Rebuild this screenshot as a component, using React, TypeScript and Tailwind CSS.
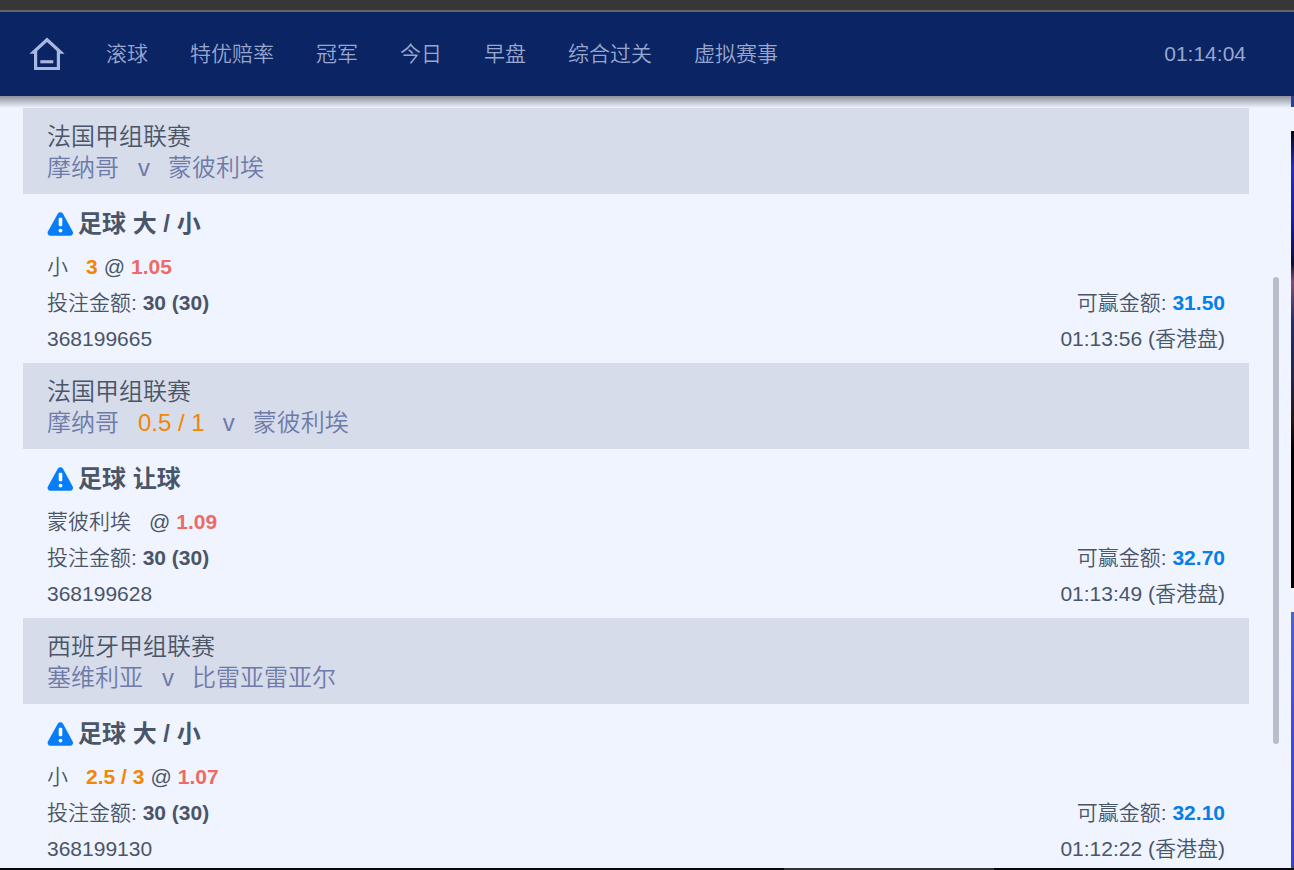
import React from "react";

type Bet = {
  id: string;
  league: string;
  home: string;
  handicap?: string;
  away: string;
  market: string;
  pick: string;
  line?: string;
  odds: string;
  stake: string;
  payout: string;
  time: string;
};

const navItems = ["滚球", "特优赔率", "冠军", "今日", "早盘", "综合过关", "虚拟赛事"];

const bets: Bet[] = [
  {
    id: "368199665",
    league: "法国甲组联赛",
    home: "摩纳哥",
    away: "蒙彼利埃",
    market: "足球 大 / 小",
    pick: "小",
    line: "3",
    odds: "1.05",
    stake: "30 (30)",
    payout: "31.50",
    time: "01:13:56",
  },
  {
    id: "368199628",
    league: "法国甲组联赛",
    home: "摩纳哥",
    handicap: "0.5 / 1",
    away: "蒙彼利埃",
    market: "足球 让球",
    pick: "蒙彼利埃",
    odds: "1.09",
    stake: "30 (30)",
    payout: "32.70",
    time: "01:13:49",
  },
  {
    id: "368199130",
    league: "西班牙甲组联赛",
    home: "塞维利亚",
    away: "比雷亚雷亚尔",
    market: "足球 大 / 小",
    pick: "小",
    line: "2.5 / 3",
    odds: "1.07",
    stake: "30 (30)",
    payout: "32.10",
    time: "01:12:22",
  },
];

const HomeIcon = () => (
  <svg width="36" height="36" viewBox="0 0 36 36" fill="#a9b8e0" aria-hidden="true">
    <path
      fillRule="evenodd"
      d="M18 1.4 35.6 17.8H31V34H5V17.8H.4zM18 6 8.2 15.1V30.9h19.6V15.1z"
    />
    <path d="M11.3 24.2h13v3.1h-13z" />
  </svg>
);

const WarningIcon = () => (
  <svg width="26" height="25" viewBox="0 0 26 25" aria-hidden="true">
    <path
      d="M10.9 1.6a3.1 3.1 0 0 1 5 0l9.5 17.4a3 3 0 0 1-2.5 4.8H3.7a3 3 0 0 1-2.5-4.8z"
      fill="#077df7"
    />
    <rect x="11.7" y="5.8" width="3.6" height="8.5" rx="1.2" fill="#fff" />
    <circle cx="13.5" cy="18.6" r="1.9" fill="#fff" />
  </svg>
);

const Header = () => (
  <header className="flex h-[84px] shrink-0 items-center bg-[#0b2463] pr-12 pl-[29px] text-[#98a7cf]">
    <a href="#" aria-label="首页">
      <HomeIcon />
    </a>
    <nav className="ml-[41px] flex gap-[42px]">
      {navItems.map((item) => (
        <a href="#" key={item} className="whitespace-nowrap">
          {item}
        </a>
      ))}
    </nav>
    <time className="ml-auto">01:14:04</time>
  </header>
);

const BetCard = ({ bet }: { bet: Bet }) => (
  <article>
    <div className="bg-[#d6dcea] px-6 pt-[13px] pb-[11px] text-2xl leading-[31px]">
      <h2>{bet.league}</h2>
      <div className="flex text-[#6e7ba8]">
        <span className="mr-[19px]">{bet.home}</span>
        {bet.handicap && (
          <span className="mr-[18px] text-[#f08705]">{bet.handicap}</span>
        )}
        <span className="mr-[18px]">v</span>
        <span>{bet.away}</span>
      </div>
    </div>
    <div className="px-6 pt-3 pb-[6px] leading-9">
      <h3 className="mb-[7px] flex items-center gap-[5px] text-2xl leading-9 font-bold">
        <WarningIcon />
        {bet.market}
      </h3>
      <div className="flex">
        <span className="mr-[18px]">{bet.pick}</span>
        {bet.line && (
          <b className="mr-[6px] font-bold text-[#f08705]">{bet.line}</b>
        )}
        <span className="mr-[6px]">@</span>
        <b className="font-bold text-[#ee6a66]">{bet.odds}</b>
      </div>
      <div className="flex justify-between">
        <span>
          投注金额: <b className="font-bold">{bet.stake}</b>
        </span>
        <span>
          可赢金额: <b className="font-bold text-[#077ee8]">{bet.payout}</b>
        </span>
      </div>
      <div className="flex justify-between">
        <span>{bet.id}</span>
        <span>{bet.time} (香港盘)</span>
      </div>
    </div>
  </article>
);

// Sliver of the page that stays visible behind the bet list
const PageEdge = () => (
  <div className="flex w-[3px] shrink-0 flex-col">
    <div className="h-[11px] bg-[#24439b]" />
    <div className="mt-6 flex-[457] bg-[linear-gradient(#05060f,#2a2cc0_8%,#1c1d9c_20%,#0c0c3a_29%,#8a4a78_33%,#252a78_42%,#23264f_54%,#2a1614_63%,#000_70%)]" />
    <div className="mt-6 flex-[256] bg-linear-to-b from-[#4767d2] via-[#4148e0] to-[#3c3fd6]" />
  </div>
);

const App = () => {
  return (
    <div className="flex h-screen flex-col overflow-hidden bg-[#f0f4ff] font-['Liberation_Sans','Noto_Sans_CJK_SC',sans-serif] text-[21px] font-[350] text-[#4a5568]">
      <div className="h-3 shrink-0 border-b-2 border-[#666] bg-[#373737]" />
      <Header />
      <div className="flex min-h-0 flex-1">
        <main className="relative min-w-0 flex-1 overflow-hidden pt-3 pr-[42px] pl-[23px]">
          {/* Header shadow */}
          <div className="absolute inset-x-0 top-0 h-3 bg-linear-to-b from-[#8d919c] to-transparent" />
          {bets.map((bet) => (
            <BetCard key={bet.id} bet={bet} />
          ))}
          {/* Scroll thumb */}
          <div className="absolute top-[23.5%] right-3 h-[60.4%] w-[6px] rounded-full bg-[#b7bdca]" />
        </main>
        <PageEdge />
      </div>
      <div className="flex h-[2px] shrink-0 bg-[#05070d]">
        <div className="ml-[60.6%] w-[16.2%] bg-[#333]" />
      </div>
    </div>
  );
};

export default App;
